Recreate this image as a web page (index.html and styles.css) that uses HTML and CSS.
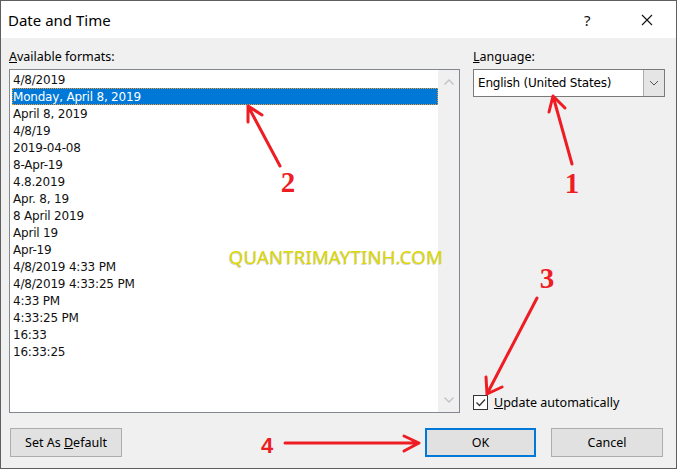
FILE: index.html
```html
<!DOCTYPE html>
<html lang="en">
<head>
    <meta charset="UTF-8">
    <title>Date and Time</title>
    <link rel="stylesheet" href="styles.css">
</head>
<body>
    <div class="dialog">
        <div class="titlebar">
            <span class="title">Date and Time</span>
            <span class="help">?</span>
            <span class="close">
                <svg width="12" height="12" viewBox="0 0 12 12"><path d="M1 1 L11 11 M11 1 L1 11" stroke="#111" stroke-width="1.1" fill="none"/></svg>
            </span>
        </div>

        <div class="content">
            <div class="columns">
                <div class="formats">
                    <div class="label"><u>A</u>vailable formats:</div>
                    <div class="listbox">
                        <ul class="items">
                            <li>4/8/2019</li>
                            <li class="selected">Monday, April 8, 2019</li>
                            <li>April 8, 2019</li>
                            <li>4/8/19</li>
                            <li>2019-04-08</li>
                            <li>8-Apr-19</li>
                            <li>4.8.2019</li>
                            <li>Apr. 8, 19</li>
                            <li>8 April 2019</li>
                            <li>April 19</li>
                            <li>Apr-19</li>
                            <li>4/8/2019 4:33 PM</li>
                            <li>4/8/2019 4:33:25 PM</li>
                            <li>4:33 PM</li>
                            <li>4:33:25 PM</li>
                            <li>16:33</li>
                            <li>16:33:25</li>
                        </ul>
                        <div class="scrollbar">
                            <svg width="10" height="6" viewBox="0 0 10 6"><path d="M0.5 5.5 L5 1 L9.5 5.5" stroke="#c2c2c2" stroke-width="1.4" fill="none"/></svg>
                            <svg width="10" height="6" viewBox="0 0 10 6"><path d="M0.5 0.5 L5 5 L9.5 0.5" stroke="#c2c2c2" stroke-width="1.4" fill="none"/></svg>
                        </div>
                    </div>
                </div>

                <div class="side">
                    <div class="label"><u>L</u>anguage:</div>
                    <div class="combo">
                        <span class="combo-text">English (United States)</span>
                        <span class="combo-btn">
                            <svg width="10" height="6" viewBox="0 0 10 6"><path d="M1 1 L5 5 L9 1" stroke="#555" stroke-width="1" fill="none"/></svg>
                        </span>
                    </div>
                    <div class="check">
                        <span class="box">
                            <svg width="13" height="13" viewBox="0 0 13 13"><path d="M2.5 6.5 L5.5 9.5 L11 3.5" stroke="#333" stroke-width="1.3" fill="none"/></svg>
                        </span>
                        <span><u>U</u>pdate automatically</span>
                    </div>
                </div>
            </div>

            <div class="buttons">
                <button class="btn">Set As <u>D</u>efault</button>
                <span class="spacer"></span>
                <button class="btn btn-default">OK</button>
                <button class="btn btn-cancel">Cancel</button>
            </div>
        </div>

        <div class="watermark">QUANTRIMAYTINH.COM</div>

        <svg class="annotations" width="677" height="469" viewBox="0 0 677 469">
            <g stroke="#ee1d23" stroke-width="3" fill="none" stroke-linecap="round" stroke-linejoin="round">
                <path d="M572 164 L553 96 M549 112 L553 96 L565 108"/>
                <path d="M280 166 L248 106 M248 122 L248 106 L262 115"/>
                <path d="M537 298 L487 394 M486 377 L487 394 L502 387"/>
                <path d="M285 443 L419 443 M404 436 L419 443 L404 451"/>
            </g>
            <g fill="#ee1d23">
                <text class="num" x="572" y="193">1</text>
                <text class="num" x="288" y="192">2</text>
                <text class="num" x="547" y="288">3</text>
                <text class="num num-sans" x="267" y="453">4</text>
            </g>
        </svg>
    </div>
</body>
</html>
```

FILE: styles.css
```css
* {
    margin: 0;
    padding: 0;
    box-sizing: border-box;
}

body {
    width: 677px;
    height: 469px;
    overflow: hidden;
    font-family: "Noto Sans", "Open Sans", sans-serif;
    font-size: 12.5px;
    color: #000;
    background-color: #f0f0f0;
}

.dialog {
    position: relative;
    width: 677px;
    height: 469px;
    border: 1px solid #5f5f5f;
    background-color: #f0f0f0;
    display: flex;
    flex-direction: column;
}

.titlebar {
    height: 37px;
    background-color: white;
    display: flex;
    align-items: center;
    padding-left: 7px;
}

.title {
    font-size: 15px;
    flex: 1;
}

.help {
    font-size: 15px;
    width: 56px;
    color: #111;
}

.close {
    width: 36px;
    display: flex;
    align-items: center;
    padding-left: 1px;
}

.content {
    flex: 1;
    display: flex;
    flex-direction: column;
    padding: 11px 11px 0 8px;
}

.columns {
    display: flex;
    gap: 13px;
}

.label {
    height: 16px;
    line-height: 16px;
    margin-bottom: 4px;
}

.formats {
    width: 451px;
}

.listbox {
    height: 344px;
    background-color: white;
    border: 1px solid #828790;
    display: flex;
}

.items {
    flex: 1;
    list-style: none;
    padding: 1px 0 0 2px;
    font-family: "DejaVu Sans", sans-serif;
    font-size: 12px;
    letter-spacing: -0.2px;
}

.items li {
    height: 17px;
    line-height: 19px;
    padding-left: 1px;
    color: #111;
}

.items li.selected {
    background-color: #0078d7;
    color: white;
    outline: 1px dotted #f29a2a;
    outline-offset: -1px;
}

.scrollbar {
    width: 21px;
    background-color: #f0f0f0;
    display: flex;
    flex-direction: column;
    justify-content: space-between;
    align-items: center;
    padding: 9px 0 9px 0;
}

.side {
    flex: 1;
    display: flex;
    flex-direction: column;
}

.combo {
    height: 28px;
    background-color: white;
    border: 1px solid #7a7a7a;
    display: flex;
}

.combo-text {
    flex: 1;
    padding-left: 4px;
    line-height: 27px;
    font-family: "DejaVu Sans", sans-serif;
    font-size: 12px;
    letter-spacing: -0.2px;
}

.combo-btn {
    width: 21px;
    background-color: #e5e5e5;
    border-left: 1px solid #adadad;
    display: flex;
    align-items: center;
    justify-content: center;
}

.check {
    margin-top: auto;
    margin-bottom: 3px;
    height: 16px;
    display: flex;
    align-items: center;
    gap: 6px;
}

.box {
    width: 15px;
    height: 15px;
    border: 1px solid #333;
    background-color: white;
    display: flex;
}

.buttons {
    display: flex;
    margin-top: 15px;
    padding-left: 1px;
    padding-right: 2px;
}

.spacer {
    flex: 1;
}

.btn {
    width: 112px;
    height: 29px;
    font-family: "Noto Sans", "Open Sans", sans-serif;
    font-size: 12.5px;
    color: #000;
    background-color: #e1e1e1;
    border: 1px solid #adadad;
}

.btn-default {
    width: 111px;
    border: 2px solid #0078d7;
}

.btn-cancel {
    margin-left: 15px;
}

.watermark {
    position: absolute;
    left: 228px;
    top: 243px;
    font-family: "Noto Sans", sans-serif;
    font-size: 18.5px;
    color: #dcd800;
    text-shadow: -1px 1px 0 #d4d4d4;
    letter-spacing: 0.2px;
}

.annotations {
    position: absolute;
    left: -1px;
    top: -1px;
}

.num {
    font-family: "Liberation Serif", serif;
    font-weight: bold;
    font-size: 29px;
    text-anchor: middle;
}

.num-sans {
    font-family: "Liberation Sans", sans-serif;
    font-size: 22px;
}
```
